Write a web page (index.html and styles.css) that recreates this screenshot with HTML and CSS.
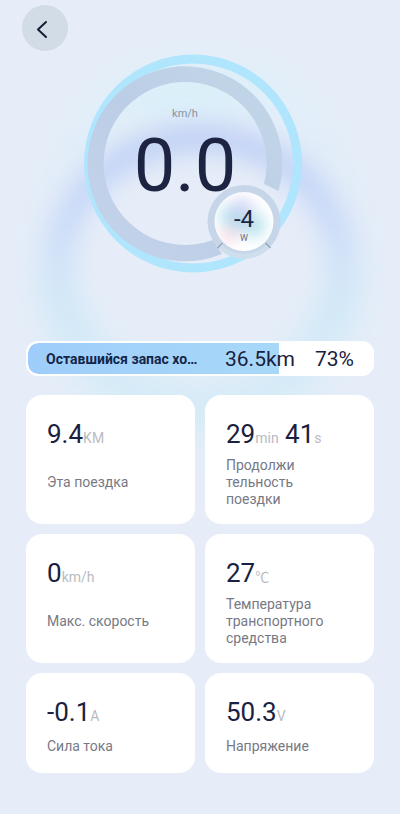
FILE: index.html
```html
<!DOCTYPE html>
<html lang="ru">
<head>
<meta charset="utf-8">
<meta name="viewport" content="width=device-width, initial-scale=1">
<title>Поездка</title>
<link rel="stylesheet" href="styles.css">
</head>
<body>
<div class="page">
  <svg class="halo" viewBox="0 0 400 480" aria-hidden="true">
    <defs>
      <filter id="soft" x="-30%" y="-30%" width="160%" height="160%"><feGaussianBlur stdDeviation="17"/></filter>
      <filter id="mid" x="-30%" y="-30%" width="160%" height="160%"><feGaussianBlur stdDeviation="13"/></filter>
      <linearGradient id="outer" x1="0" y1="0" x2="0" y2="1">
        <stop offset="0" stop-color="#d9f3fa" stop-opacity=".4"/>
        <stop offset=".4" stop-color="#d8e9f8" stop-opacity=".25"/>
        <stop offset=".7" stop-color="#cdebf7" stop-opacity=".45"/>
        <stop offset="1" stop-color="#c8ecf7" stop-opacity=".5"/>
      </linearGradient>
      <linearGradient id="inner" x1="0" y1="0" x2="0" y2="1">
        <stop offset="0" stop-color="#b8cbf4"/>
        <stop offset=".3" stop-color="#bcd0f9" stop-opacity=".8"/>
        <stop offset=".55" stop-color="#bedcf8" stop-opacity=".5"/>
        <stop offset="1" stop-color="#c4eaf6" stop-opacity=".2"/>
      </linearGradient>
    </defs>
    <ellipse cx="200" cy="244" rx="150" ry="168" fill="none" stroke="url(#outer)" stroke-width="50" filter="url(#soft)"/>
    <ellipse cx="190" cy="96" rx="70" ry="20" fill="#d6f0fa" opacity=".8" filter="url(#soft)"/>
    <ellipse cx="200" cy="270" rx="142" ry="132" fill="none" stroke="url(#inner)" stroke-width="24" filter="url(#mid)"/>
  </svg>

  <header class="top">
    <button class="back" type="button" aria-label="Назад">
      <svg viewBox="0 0 46 46" aria-hidden="true"><path d="M24 17L16 24.500l8 7.500"/></svg>
    </button>
  </header>

  <main>
    <section class="gauge">
      <svg viewBox="0 0 220 220" role="img" aria-label="0.0 km/h, -4 W">
        <defs>
          <linearGradient id="track" x1="0" y1="1" x2="1" y2="0">
            <stop offset="0" stop-color="#c3d3ea"/>
            <stop offset=".5" stop-color="#bccee6"/>
            <stop offset="1" stop-color="#c3d7e8"/>
          </linearGradient>
          <filter id="blurBall" x="-50%" y="-50%" width="200%" height="200%"><feGaussianBlur stdDeviation="7"/></filter>
          <filter id="edge"><feGaussianBlur stdDeviation=".6"/></filter>
          <clipPath id="ball"><circle cx="161" cy="168.500" r="29.500"/></clipPath>
        </defs>
        <circle cx="110" cy="110.500" r="104.500" fill="none" stroke="#afe5fd" stroke-width="9" filter="url(#edge)"/>
        <path d="M195.500 138A97.500 97.500 0 1 0 139 201L130 187A81.500 81.500 0 1 1 181 131Z" fill="url(#track)"/>
        <circle cx="161" cy="168.500" r="36.500" fill="#c6d6e8"/>
        <path d="M136.500 193A34.500 34.500 0 0 0 185.500 193" fill="none" stroke="#cfdeed" stroke-width="5"/>
        <path d="M139.500 190l-5 5M182.500 190l5 5" stroke="#98a7b8" stroke-width="1.500"/>
        <circle cx="161" cy="168.500" r="29.500" fill="#fff"/>
        <g clip-path="url(#ball)">
          <g filter="url(#blurBall)">
            <ellipse cx="158" cy="153" rx="13" ry="7" fill="#d5d5f7"/>
            <ellipse cx="144" cy="163" rx="9" ry="9" fill="#bde8f1"/>
            <ellipse cx="171" cy="172" rx="12" ry="13" fill="#bfe6ee"/>
            <ellipse cx="155" cy="168" rx="13" ry="10" fill="#b8d8ec"/>
            <ellipse cx="146" cy="183" rx="11" ry="6" fill="#f8d9e2"/>
          </g>
        </g>
        <text class="g-unit" x="102" y="64">km/h</text>
        <text class="g-speed" x="102" y="138">0.0</text>
        <text class="g-power" x="161" y="174">-4</text>
        <text class="g-watt" x="161" y="188">W</text>
      </svg>
    </section>

    <section class="range">
      <div class="range-fill" style="width:73%"></div>
      <span class="range-name">Оставшийся запас хо…</span>
      <span class="range-dist">36.5km</span>
      <span class="range-pct">73%</span>
    </section>

    <section class="cards">
      <article class="card"><p class="value">9.4<small>KM</small></p><p class="label">Эта поездка</p></article>
      <article class="card"><p class="value">29<small>min</small> 41<small>s</small></p><p class="label">Продолжи<br>тельность<br>поездки</p></article>
      <article class="card"><p class="value">0<small>km/h</small></p><p class="label">Макс. скорость</p></article>
      <article class="card"><p class="value">27<small>℃</small></p><p class="label">Температура транспортного средства</p></article>
      <article class="card"><p class="value">-0.1<small>A</small></p><p class="label">Сила тока</p></article>
      <article class="card"><p class="value">50.3<small>V</small></p><p class="label">Напряжение</p></article>
    </section>
  </main>
</div>
</body>
</html>
```

FILE: styles.css
```css
* {
  box-sizing: border-box;
}

body {
  margin: 0;
  background: #e6edf8;
  color: #1a2140;
  font-family: Roboto, "Noto Sans", sans-serif;
}

p {
  margin: 0;
}

.page {
  position: relative;
  overflow: hidden;
  min-height: 100vh;
  padding: 5px 26px 42px;
}

.halo {
  position: absolute;
  top: 0;
  left: 50%;
  width: 400px;
  transform: translateX(-50%);
}

.top,
main {
  position: relative;
}

.top {
  margin-left: -4px;
}

.back {
  display: block;
  width: 46px;
  height: 46px;
  padding: 0;
  border: 0;
  border-radius: 50%;
  background: #d1dce6;
}

.back svg {
  display: block;
  fill: none;
  stroke: #161d33;
  stroke-width: 2;
  stroke-linecap: round;
  stroke-linejoin: round;
}

.gauge {
  display: flex;
  justify-content: center;
  margin: 2px 14px 68px 0;
}

.gauge svg {
  width: 220px;
  height: 220px;
}

.gauge text {
  text-anchor: middle;
  fill: #1d2442;
}

.gauge .g-unit {
  font-size: 11px;
  fill: #8592a6;
}

.gauge .g-speed {
  font-size: 74px;
}

.gauge .g-power {
  font-size: 24px;
}

.gauge .g-watt {
  font-size: 9px;
  fill: #66718a;
}

.range {
  position: relative;
  display: flex;
  align-items: center;
  height: 35px;
  padding: 0 18px;
  overflow: hidden;
  border: 2px solid #fff;
  border-radius: 12px;
  background: #fff;
}

.range-fill {
  position: absolute;
  inset: 0 auto 0 0;
  border-radius: 10px 0 0 10px;
  background: linear-gradient(90deg, #9fcdfb, #a8d8f8);
}

.range-name,
.range-dist,
.range-pct {
  position: relative;
  white-space: nowrap;
}

.range-name {
  flex: 1;
  min-width: 0;
  margin-right: 16px;
  overflow: hidden;
  text-overflow: ellipsis;
  font-size: 14px;
  font-weight: 700;
  color: #12264a;
}

.range-dist,
.range-pct {
  font-size: 21px;
}

.range-dist {
  margin-right: 20px;
}

.cards {
  display: grid;
  grid-template-columns: 1fr 1fr;
  gap: 10px;
  margin-top: 19px;
}

.card {
  display: flex;
  flex-direction: column;
  gap: 5px;
  padding: 21px 21px 16px;
  border-radius: 16px;
  background: #fff;
}

.value {
  font-size: 26px;
  line-height: 36px;
  white-space: nowrap;
}

.value small {
  font-family: Roboto, "Noto Sans CJK SC", sans-serif;
  font-size: 14px;
  line-height: 1;
  color: #b9bbc1;
}

.label {
  display: flex;
  flex: 1;
  align-items: center;
  min-height: 22px;
  font-size: 14px;
  line-height: 17px;
  color: #777985;
}
```
